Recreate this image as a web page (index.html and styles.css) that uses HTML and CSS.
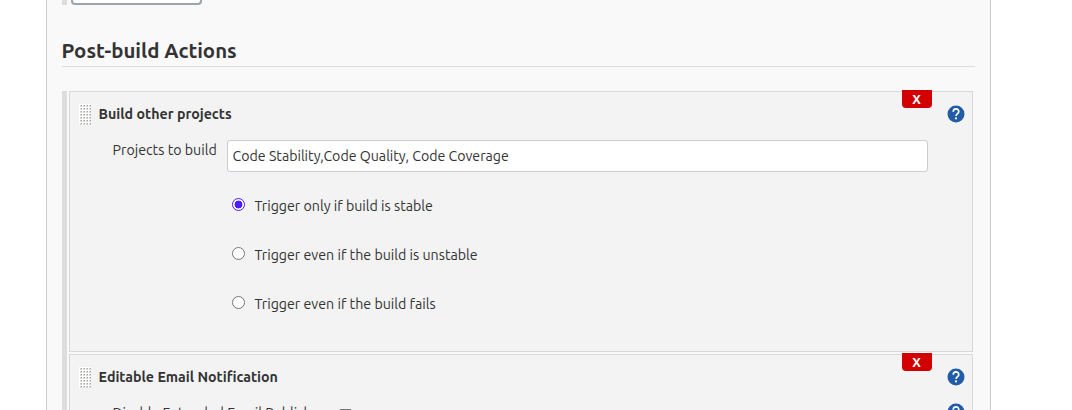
FILE: index.html
```
<!DOCTYPE html>
<html lang="en">
<head>
<meta charset="utf-8">
<title>Post-build Actions</title>
<link rel="stylesheet" href="styles.css">
</head>
<body>
<svg class="defs" width="0" height="0" aria-hidden="true">
  <defs>
    <pattern id="dots" width="3" height="3" patternUnits="userSpaceOnUse"><rect width="3" height="3" fill="#fff"/><rect x="1" y="1" width="2" height="2" fill="#d6d6d2"/><rect x="2" y="1" width="1" height="1" fill="#a5a5a0"/></pattern>
    <symbol id="grip" viewBox="0 0 12 21"><rect width="12" height="21" fill="url(#dots)"/></symbol>
    <symbol id="help" viewBox="0 0 18 18"><circle cx="9" cy="9" r="8.5" fill="#225ca6"/><path d="M6.2 6.8C6.2 3 11.8 3 11.8 6.5C11.8 8.7 9.1 8.5 9.1 11" fill="none" stroke="#fff" stroke-width="1.7"/><rect x="8.1" y="12.4" width="1.9" height="1.9" fill="#fff"/></symbol>
  </defs>
</svg>
<main class="panel">
  <div class="previous"><div class="button-end"></div></div>
  <h2 class="title">Post-build Actions</h2>
  <div class="actions">
    <section class="block">
      <button class="remove">X</button>
      <header class="head"><svg class="grip"><use href="#grip"/></svg><b class="name">Build other projects</b><svg class="help"><use href="#help"/></svg></header>
      <div class="field"><label class="label" for="projects">Projects to build</label><input class="input" id="projects" value="Code Stability,Code Quality, Code Coverage"></div>
      <div class="options">
        <label class="option"><span class="radio checked"></span><span>Trigger only if build is stable</span></label>
        <label class="option"><span class="radio"></span><span>Trigger even if the build is unstable</span></label>
        <label class="option"><span class="radio"></span><span>Trigger even if the build fails</span></label>
      </div>
    </section>
    <section class="block">
      <button class="remove">X</button>
      <header class="head"><svg class="grip"><use href="#grip"/></svg><b class="name">Editable Email Notification</b><svg class="help"><use href="#help"/></svg></header>
      <div class="disable"><span class="disable-text">Disable Extended Email Publisher</span><span class="check"></span><svg class="help"><use href="#help"/></svg></div>
    </section>
  </div>
</main>
</body>
</html>
```
FILE: styles.css
```
* { box-sizing: border-box; }
body { margin: 0; height: 410px; overflow: hidden; background: #fff; color: #333; font: 14.22px/20px "Ubuntu", "Noto Sans", sans-serif; }
.defs { position: absolute; }
.panel { width: 945px; height: 410px; margin-left: 46px; padding: 0 15px; overflow: hidden; background: #f9f9f9; border: solid #ccc; border-width: 0 1px; }
.previous { height: 5px; margin-bottom: 31px; padding-left: 4px; border-left: 5px solid #ddd; }
.button-end { width: 131px; height: 5px; background: #fff; border: 2px solid #9aa5b1; border-top: 0; border-radius: 0 0 4px 4px; }
.title { height: 31px; margin: 0 0 24px; border-bottom: 1px solid #ddd; font-size: 20.4px; line-height: 30px; text-indent: -.5px; white-space: nowrap; }
.actions { width: 911px; padding-left: 2px; border-left: 5px solid #ddd; }
.block { position: relative; height: 261px; margin-bottom: 2px; padding: 11px 7px 0 9px; background: #f3f3f3; border: 1px solid #d8d8d8; }
.remove { position: absolute; top: -2px; right: 40px; width: 30px; height: 18px; padding: 0 1px 0 0; border: 0; border-radius: 0 0 4px 4px; background: #d20000; color: #fff; font: bold 13px/18px "Ubuntu", "Noto Sans", sans-serif; }
.head { display: flex; align-items: center; height: 22px; }
.grip { width: 12px; height: 21px; }
.name { margin-left: 7.6px; white-space: nowrap; }
.help { width: 18px; height: 18px; margin-left: auto; flex: none; }
.field { display: flex; padding: 15px 0 0 33.5px; }
.label { width: 114.5px; white-space: nowrap; }
.input { width: 701px; height: 32px; padding: 0 5px 1px 4.6px; border: 1px solid #ccc; border-radius: 3px; background: #fff; color: #333; font: inherit; font-size: 14.18px; }
.options { padding: 24px 0 0 153px; }
.option { display: flex; align-items: center; height: 20px; margin-bottom: 29px; white-space: nowrap; }
.radio { width: 13px; height: 13px; margin: -3px 9.4px 0 0; border: 1px solid #767676; border-radius: 50%; background: #fff; }
.checked { border-color: #4b1cff; background: radial-gradient(circle, #4b1cff 0 3.7px, #fff 4.2px); }
.disable { display: flex; align-items: flex-start; padding: 15px 0 0 33.5px; }
.disable-text { width: 226.5px; white-space: nowrap; }
.check { width: 13px; height: 13px; margin-top: 6px; border: 1px solid #767676; border-radius: 2px; background: #fff; }
```
